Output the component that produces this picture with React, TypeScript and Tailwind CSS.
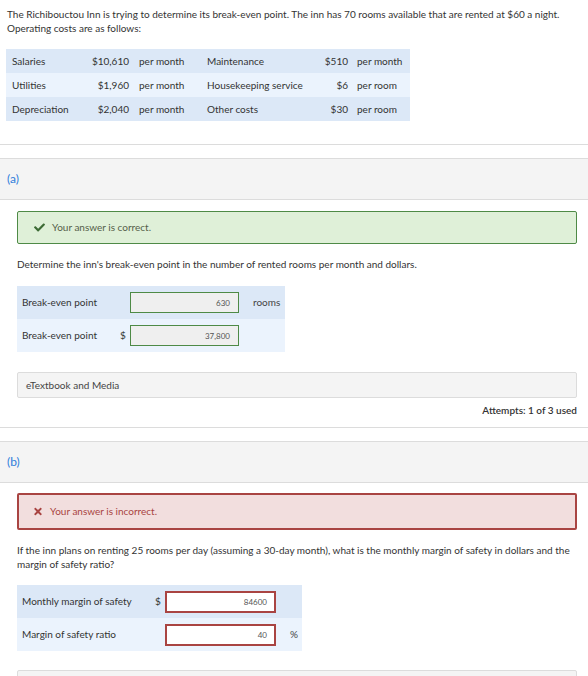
import { FaCheck, FaTimes } from 'react-icons/fa';

const stemRows = [
  { a: 'Salaries', av: '$10,610', au: 'per month', b: 'Maintenance', bv: '$510', bu: 'per month' },
  { a: 'Utilities', av: '$1,960', au: 'per month', b: 'Housekeeping service', bv: '$6', bu: 'per room' },
  { a: 'Depreciation', av: '$2,040', au: 'per month', b: 'Other costs', bv: '$30', bu: 'per room' },
];

function PartHeader({ label }: { label: string }) {
  return (
    <div className="mt-[13px] h-[42px] border-y border-[#dcdcdc] bg-[#f4f4f4] px-[7px] flex items-center">
      <span className="text-[12px] text-[#2f7ddb]">{label}</span>
    </div>
  );
}

export default function App() {
  return (
    <div className="w-[588px] bg-white font-['Lato','Noto_Sans',sans-serif] text-[#333] text-[10px]">
      {/* Stem */}
      <div className="border-b border-[#dcdcdc] pb-[23px]">
        <p className="px-[7px] pt-[7px] leading-[14px]">
          The Richibouctou Inn is trying to determine its break-even point. The inn has 70 rooms available that are rented at $60 a night.
          Operating costs are as follows:
        </p>
        <div className="mt-[14px] ml-[6px] w-[404px]">
          {stemRows.map((r, i) => (
            <div
              key={r.a}
              className={`grid grid-cols-[79px_48px_68px_109px_42px_58px] h-[24px] items-center ${i % 2 === 0 ? 'bg-[#dce8f7]' : 'bg-[#ebf3fd]'}`}
            >
              <span className="pl-[6px]">{r.a}</span>
              <span className="text-right pr-[4px]">{r.av}</span>
              <span className="pl-[6px]">{r.au}</span>
              <span className="pl-[6px]">{r.b}</span>
              <span className="text-right pr-[4px]">{r.bv}</span>
              <span className="pl-[5px]">{r.bu}</span>
            </div>
          ))}
        </div>
      </div>

      {/* Part (a) */}
      <PartHeader label="(a)" />
      <div className="pl-[17px] pr-[11px] border-b border-[#dcdcdc] pb-[10px]">
        <div className="mt-[11px] h-[33px] rounded-[2px] border border-[#4e8a46] bg-[#dff0d8] flex items-center pl-[16px]">
          <FaCheck className="w-[11px] h-[11px] text-[#3d6b35]" />
          <span className="ml-[7px] text-[#55604a]">Your answer is correct.</span>
        </div>
        <p className="mt-[13px] leading-[14px]">
          Determine the inn's break-even point in the number of rented rooms per month and dollars.
        </p>
        <div className="mt-[15px] w-[268px]">
          <div className="h-[33px] bg-[#dce8f7] flex items-center">
            <span className="pl-[5px] w-[103px]">Break-even point</span>
            <span className="w-[10px]"></span>
            <div className="w-[109px] h-[21px] border border-[#4e8a46] bg-[#efefef] flex items-center justify-end pr-[8px] text-[8px] text-[#555]">630</div>
            <span className="pl-[14px] text-[#444]">rooms</span>
          </div>
          <div className="h-[33px] bg-[#ebf3fd] flex items-center">
            <span className="pl-[5px] w-[103px]">Break-even point</span>
            <span className="w-[10px]">$</span>
            <div className="w-[109px] h-[21px] border border-[#4e8a46] bg-[#efefef] flex items-center justify-end pr-[8px] text-[8px] text-[#555]">37,800</div>
          </div>
        </div>
        <div className="mt-[20px] h-[26px] rounded-[2px] border border-[#dcdcdc] bg-[#f4f4f4] flex items-center pl-[8px] text-[10px] text-[#444]">
          eTextbook and Media
        </div>
        <div className="mt-[5px] text-right leading-[14px] font-semibold text-[#333]">Attempts: 1 of 3 used</div>
      </div>

      {/* Part (b) */}
      <PartHeader label="(b)" />
      <div className="pl-[17px] pr-[11px]">
        <div className="mt-[10px] h-[37px] rounded-[2px] border-2 border-[#a94442] bg-[#f2dede] flex items-center pl-[14px]">
          <FaTimes className="w-[10px] h-[11px] text-[#a94442]" />
          <span className="ml-[7px] text-[#a94442]">Your answer is incorrect.</span>
        </div>
        <p className="mt-[13px] leading-[14px]">
          If the inn plans on renting 25 rooms per day (assuming a 30-day month), what is the monthly margin of safety in dollars and the margin of safety ratio?
        </p>
        <div className="mt-[14px] w-[285px]">
          <div className="h-[33px] bg-[#dce8f7] flex items-center">
            <span className="pl-[5px] w-[138px]">Monthly margin of safety</span>
            <span className="w-[10px]">$</span>
            <div className="w-[111px] h-[22px] border-2 border-[#a94442] bg-white flex items-center justify-end pr-[7px] text-[8px] text-[#555]">84600</div>
          </div>
          <div className="h-[33px] bg-[#ebf3fd] flex items-center">
            <span className="pl-[5px] w-[138px]">Margin of safety ratio</span>
            <span className="w-[10px]"></span>
            <div className="w-[111px] h-[22px] border-2 border-[#a94442] bg-white flex items-center justify-end pr-[7px] text-[8px] text-[#555]">40</div>
            <span className="pl-[14px] text-[#444]">%</span>
          </div>
        </div>
        <div className="mt-[19px] h-[26px] rounded-[2px] border border-[#dcdcdc] bg-[#f4f4f4]" />
      </div>
    </div>
  );
}
